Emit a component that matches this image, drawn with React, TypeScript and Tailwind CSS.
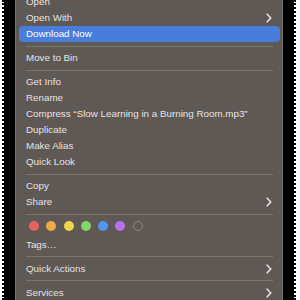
import React from "react";

type Item =
  | { kind: "row"; label: string; sub?: boolean; active?: boolean }
  | { kind: "sep" }
  | { kind: "tags" };

const items: Item[] = [
  { kind: "row", label: "Open" },
  { kind: "row", label: "Open With", sub: true },
  { kind: "row", label: "Download Now", active: true },
  { kind: "sep" },
  { kind: "row", label: "Move to Bin" },
  { kind: "sep" },
  { kind: "row", label: "Get Info" },
  { kind: "row", label: "Rename" },
  { kind: "row", label: "Compress \u201CSlow Learning in a Burning Room.mp3\u201D" },
  { kind: "row", label: "Duplicate" },
  { kind: "row", label: "Make Alias" },
  { kind: "row", label: "Quick Look" },
  { kind: "sep" },
  { kind: "row", label: "Copy" },
  { kind: "row", label: "Share", sub: true },
  { kind: "sep" },
  { kind: "tags" },
  { kind: "row", label: "Tags\u2026" },
  { kind: "sep" },
  { kind: "row", label: "Quick Actions", sub: true },
  { kind: "sep" },
  { kind: "row", label: "Services", sub: true },
];

const tagColors = ["bg-[#e4625b]", "bg-[#f0a947]", "bg-[#f1d44d]", "bg-[#7ed86a]", "bg-[#4f97f7]", "bg-[#b86ff0]"];

function Chevron() {
  return (
    <svg width="6" height="10" viewBox="0 0 6 10" className="shrink-0">
      <path d="M1.2 1.2 L4.8 5 L1.2 8.8" fill="none" stroke="#e6e3e1" strokeWidth="1.6" strokeLinecap="round" strokeLinejoin="round" />
    </svg>
  );
}

function Row({ label, sub, active }: { label: string; sub?: boolean; active?: boolean }) {
  return (
    <div
      className={`ml-[3px] mr-[2px] flex h-4 items-center justify-between rounded-[4px] pl-[7px] pr-[8px] ${
        active ? "bg-[#4a7cdc] text-white" : "text-[#e6e3e1]"
      }`}
    >
      <span className="whitespace-nowrap pt-[1px]">{label}</span>
      {sub && <Chevron />}
    </div>
  );
}

export default function App() {
  return (
    <div className="flex h-[300px] w-[300px] overflow-hidden bg-white" style={{ fontFamily: "'Liberation Sans', Arial, sans-serif" }}>
      <div className="w-[2px] shrink-0" />
      <div className="w-[2px] shrink-0 border-l-2 border-dotted border-black" />
      <div className="w-[11px] shrink-0 bg-black" />
      <div className="w-[268px] shrink-0 border-x border-[#75716e] bg-[#5e5955] text-[9.8px]">
        <div className="-mt-[6px] flex flex-col">
          {items.map((it, i) => {
            if (it.kind === "sep")
              return (
                <div key={i} className="flex h-2 items-center pl-[10px] pr-[9px]">
                  <div className="h-px w-full bg-[#7a7572]" />
                </div>
              );
            if (it.kind === "tags")
              return (
                <div key={i} className="flex h-[18.6px] items-start gap-[7.3px] pl-[13px] pt-[3px]">
                  {tagColors.map((c) => (
                    <div key={c} className={`h-[10px] w-[10px] rounded-full ${c}`} />
                  ))}
                  <div className="h-[10px] w-[10px] rounded-full border border-[#8a8684]" />
                </div>
              );
            return <Row key={i} label={it.label} sub={it.sub} active={it.active} />;
          })}
        </div>
      </div>
      <div className="w-[11px] shrink-0 bg-black" />
      <div className="w-[2px] shrink-0 border-r-2 border-dotted border-black" />
    </div>
  );
}
